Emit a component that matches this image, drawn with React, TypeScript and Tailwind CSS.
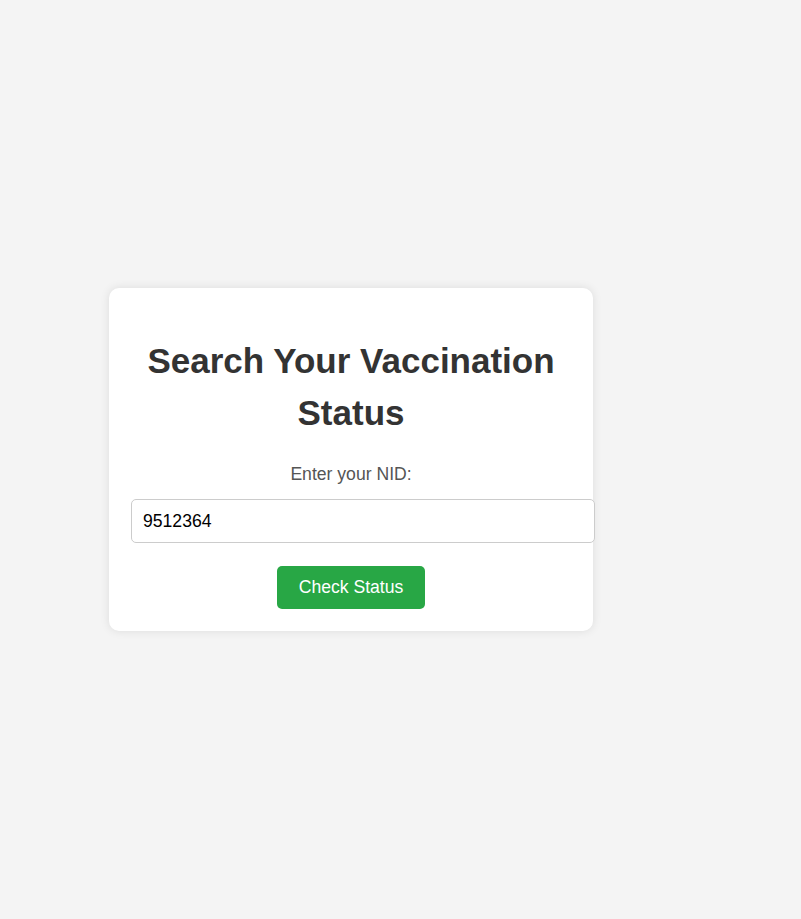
import { useState } from 'react'

const App = (): JSX.Element => {
  const [nid, setNid] = useState<string>('9512364')

  return (
    <div className="flex min-h-screen items-center bg-[#f4f4f4] pl-[109px] font-['Liberation_Sans',Arial,sans-serif]">
      <div className="w-[484px] rounded-[10px] bg-white px-[22px] pt-[47px] pb-[22px] text-center shadow-[0_0_10px_rgba(0,0,0,0.1)]">
        <h1 className="text-[35px] leading-[52px] font-bold text-[#333]">
          Search Your Vaccination Status
        </h1>
        <label className="mt-[25px] block text-[17.6px] leading-[20px] text-[#555]">
          Enter your NID:
        </label>
        <input
          className="mt-[15px] block h-[44px] w-[464px] rounded-[5px] border border-[#ccc] bg-white px-[11px] text-[17.6px] text-black outline-none"
          type="text"
          value={nid}
          onChange={(e): void => setNid(e.target.value)}
        />
        <button className="mt-[23px] h-[43px] w-[148px] rounded-[5px] bg-[#28a745] text-[17.6px] text-white">
          Check Status
        </button>
      </div>
    </div>
  )
}

export default App
